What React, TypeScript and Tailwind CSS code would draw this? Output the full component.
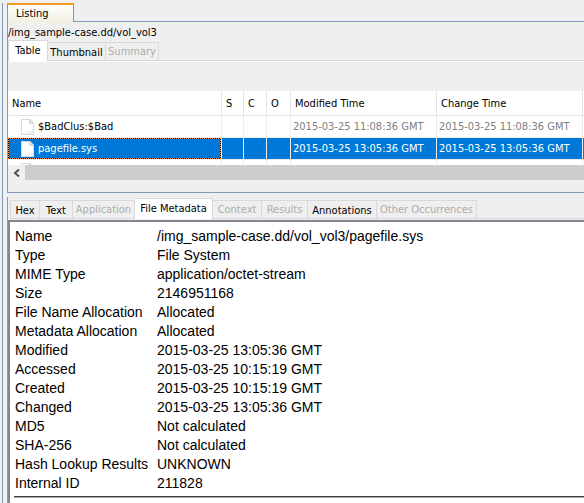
import { useState } from "react";

type Tab = { name: string; width: string; disabled?: boolean };

const viewTabs: Tab[] = [
  { name: "Table", width: "w-[40px]" },
  { name: "Thumbnail", width: "w-[58px]" },
  { name: "Summary", width: "w-[53px]", disabled: true },
];

const contentTabs: Tab[] = [
  { name: "Hex", width: "w-[30px]" },
  { name: "Text", width: "w-[33px]" },
  { name: "Application", width: "w-[62px]", disabled: true },
  { name: "File Metadata", width: "w-[78px]" },
  { name: "Context", width: "w-[49px]", disabled: true },
  { name: "Results", width: "w-[46px]", disabled: true },
  { name: "Annotations", width: "w-[69px]" },
  { name: "Other Occurrences", width: "w-[100px]", disabled: true },
];

const files = [
  { name: "$BadClus:$Bad", time: "2015-03-25 11:08:36 GMT" },
  { name: "pagefile.sys", time: "2015-03-25 13:05:36 GMT" },
];

const metadata: [string, string][] = [
  ["Name", "/img_sample-case.dd/vol_vol3/pagefile.sys"],
  ["Type", "File System"],
  ["MIME Type", "application/octet-stream"],
  ["Size", "2146951168"],
  ["File Name Allocation", "Allocated"],
  ["Metadata Allocation", "Allocated"],
  ["Modified", "2015-03-25 13:05:36 GMT"],
  ["Accessed", "2015-03-25 10:15:19 GMT"],
  ["Created", "2015-03-25 10:15:19 GMT"],
  ["Changed", "2015-03-25 13:05:36 GMT"],
  ["MD5", "Not calculated"],
  ["SHA-256", "Not calculated"],
  ["Hash Lookup Results", "UNKNOWN"],
  ["Internal ID", "211828"],
];

function TabStrip({ tabs, initial }: { tabs: Tab[]; initial: string }) {
  const [active, setActive] = useState(initial);
  return (
    <div role="tablist" className="flex h-[21px] items-end border-b border-[#d9d9d9]">
      {tabs.map((tab, i) => {
        const on = tab.name === active;
        return (
          <button
            key={tab.name}
            role="tab"
            aria-selected={on}
            disabled={tab.disabled}
            onClick={() => setActive(tab.name)}
            className={`${tab.width} flex shrink-0 justify-center border-t border-r border-[#d9d9d9] whitespace-nowrap ${
              i === 0 ? "border-l" : ""
            } ${on ? "-mb-px h-[21px] bg-white" : "h-[18px]"} ${
              tab.disabled ? "pt-px text-[#adadad]" : "pt-[2px] text-black"
            } leading-4`}
          >
            {tab.name}
          </button>
        );
      })}
    </div>
  );
}

function FileIcon() {
  return (
    <svg width="13" height="16" viewBox="0 0 13 16" className="shrink-0" aria-hidden="true">
      <path d="M0 0h9l4 4v12H0z" fill="#f3f3f3" />
      <path d="M1 1h7v4h4v5L1 15z" fill="#fff" />
      <path d="M.5 0v15.5h12V4.5M0 .5h9" fill="none" stroke="#dadada" />
      <path d="M8.5 0v4.5H13z" fill="#e2e2e2" stroke="#d4d4d4" />
    </svg>
  );
}

export default function App() {
  const [selected, setSelected] = useState("pagefile.sys");
  return (
    <div className="min-h-screen overflow-hidden bg-[#efefef] pt-[3px] pl-[2px] font-['DejaVu_Sans_Condensed','DejaVu_Sans',sans-serif] text-[11px] font-normal text-black">
      <div className="flex min-h-[500px] flex-col border-l border-[#7d9cbc] pl-1">
        <section className="flex flex-col">
          <div className="flex h-[19px] border-b border-[#7d9cbc]">
            <button className="-mb-px h-[19px] w-[67px] border-t-2 border-r border-l border-t-[#f49b22] border-r-[#7d9cbc] border-l-[#7d9cbc] bg-linear-to-b from-white to-[#f1efdf] pt-px pl-2 text-left leading-4">
              Listing
            </button>
          </div>
          <div className="border-b border-l border-[#7d9cbc]">
            <div className="h-[18px] border-t border-[#f4f2e4] leading-5">/img_sample-case.dd/vol_vol3</div>
            <TabStrip tabs={viewTabs} initial="Table" />
            <div className="h-[30px] border-t border-white" />
            <div className="h-[74px] overflow-hidden bg-white">
              <table className="w-full min-w-[720px] table-fixed border-separate border-spacing-0 text-left">
                <colgroup>
                  <col className="w-[214px]" />
                  <col className="w-[22px]" />
                  <col className="w-[23px]" />
                  <col className="w-[24px]" />
                  <col className="w-[146px]" />
                  <col className="w-[146px]" />
                  <col />
                </colgroup>
                <thead>
                  <tr className="h-[25px]">
                    {["Name", "S", "C", "O", "Modified Time", "Change Time", ""].map((h) => (
                      <th key={h} scope="col" className="border-r border-b border-[#e5e5e5] p-0 pt-[2px] pl-1 font-normal whitespace-nowrap">
                        {h}
                      </th>
                    ))}
                  </tr>
                </thead>
                <tbody>
                  {files.map((f) => {
                    const on = f.name === selected;
                    return (
                      <tr
                        key={f.name}
                        onClick={() => setSelected(f.name)}
                        className={`h-[22px] ${on ? "bg-[#0078d7] text-white" : "text-[#808080]"}`}
                      >
                        <td className="border-r border-b border-[#ececec] p-0">
                          <div
                            className={`flex h-[21px] items-center gap-1 border border-transparent pl-3 ${
                              on
                                ? "[background:linear-gradient(#0078d7,#0078d7)_padding-box,repeating-conic-gradient(#000_0_25%,#ff8c3a_0_50%)_0_0/2px_2px_border-box]"
                                : "text-black"
                            }`}
                          >
                            <FileIcon />
                            <span className="pt-[2px]">{f.name}</span>
                          </div>
                        </td>
                        <td className="border-r border-b border-[#ececec] p-0" />
                        <td className="border-r border-b border-[#ececec] p-0" />
                        <td className="border-r border-b border-[#ececec] p-0" />
                        <td className="border-r border-b border-[#ececec] p-0 pt-[2px] pl-[2px] whitespace-nowrap">{f.time}</td>
                        <td className="border-r border-b border-[#ececec] p-0 pt-[2px] pl-[2px] whitespace-nowrap">{f.time}</td>
                        <td className="border-b border-[#ececec] p-0" />
                      </tr>
                    );
                  })}
                  <tr className="h-[22px]">
                    <td className="border-r border-[#ececec] p-0">
                      <div className="pl-[13px]">
                        <FileIcon />
                      </div>
                    </td>
                    <td className="border-r border-[#ececec] p-0" />
                    <td className="border-r border-[#ececec] p-0" />
                    <td className="border-r border-[#ececec] p-0" />
                    <td className="border-r border-[#ececec] p-0" />
                    <td className="border-r border-[#ececec] p-0" />
                    <td className="p-0" />
                  </tr>
                </tbody>
              </table>
            </div>
            <div className="flex h-[27px] items-start">
              <button aria-label="Scroll left" className="flex h-[15px] w-[17px] items-center justify-center">
                <svg width="7" height="8" viewBox="0 0 7 8" aria-hidden="true">
                  <path d="M6 .5 2 4l4 3.5" fill="none" stroke="#505050" strokeWidth="2" />
                </svg>
              </button>
              <div className="h-[15px] flex-1 bg-[#cdcdcd]" />
            </div>
          </div>
        </section>

        <section className="mt-1 flex flex-1 flex-col border-l border-[#7d9cbc]">
          <div className="pt-px pl-[2px]">
            <TabStrip tabs={contentTabs} initial="File Metadata" />
          </div>
          <div className="mt-px flex-1 border-t-2 border-l-2 border-[#828790] bg-white pt-[5px] pl-1 font-['Liberation_Sans',Arial,sans-serif] text-[14px]">
            <table className="w-full table-fixed border-collapse text-left">
              <colgroup>
                <col className="w-[143px]" />
                <col />
              </colgroup>
              <tbody>
                {metadata.map(([label, value]) => (
                  <tr key={label} className="h-[19px] leading-[19px] whitespace-nowrap">
                    <th scope="row" className="p-0 pl-px font-normal">
                      {label}
                    </th>
                    <td className="p-0">{value}</td>
                  </tr>
                ))}
              </tbody>
            </table>
            <hr className="mt-[3px] h-[2px] border-t border-b border-t-[#404040] border-b-[#a8a8a8]" />
          </div>
        </section>
      </div>
    </div>
  );
}
